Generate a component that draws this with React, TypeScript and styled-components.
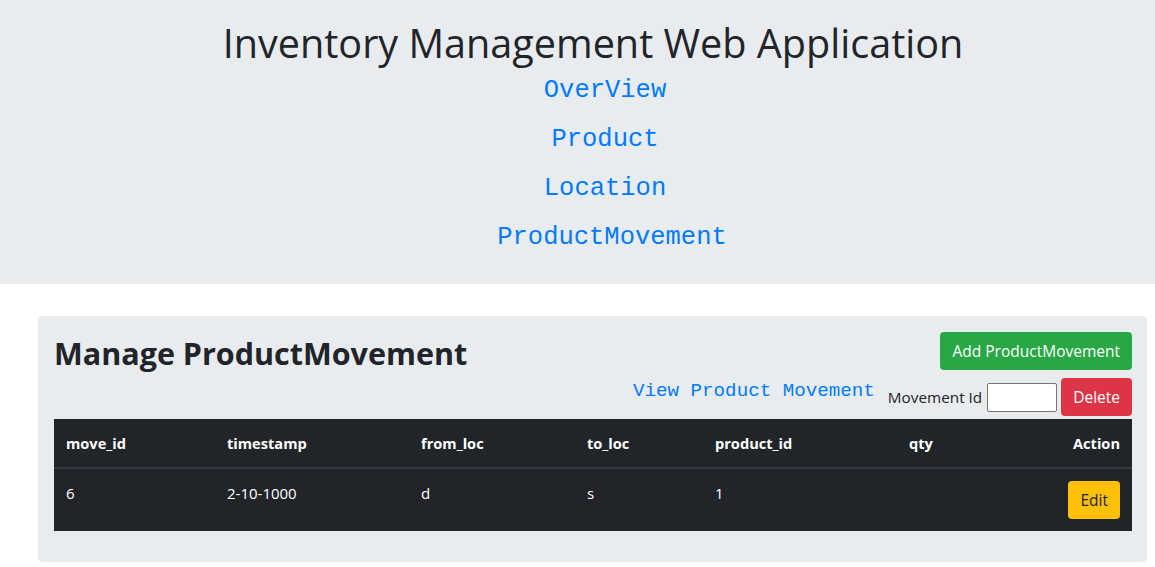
import React from 'react';
import styled, { createGlobalStyle } from 'styled-components';

const GlobalStyle = createGlobalStyle`
  html, body {
    margin: 0;
    padding: 0;
    background: #fff;
    color: #212529;
    font-family: "Open Sans", "Noto Sans", sans-serif;
    font-size: 16px;
  }
  * { box-sizing: border-box; }
`;

const Jumbotron = styled.header`
  background: #e9ecef;
  padding: 20px 0 22px 31px;
  text-align: center;
`;

const Title = styled.h1`
  margin: 0;
  font-size: 39.6px;
  font-weight: 400;
  line-height: 46px;
  color: #212529;
`;

const NavList = styled.nav`
  display: flex;
  flex-direction: column;
  align-items: center;
  padding-left: 24px;
`;

const NavLink = styled.a<{ $shift?: number }>`
  display: flex;
  align-items: center;
  height: 49px;
  padding-left: ${p => p.$shift ?? 0}px;
  font-family: "Liberation Mono", "DejaVu Sans Mono", monospace;
  font-size: 25.5px;
  color: #007bff;
  text-decoration: none;
`;

const Main = styled.main`
  padding: 32px 8px 0 38px;
`;

const Card = styled.section`
  background: #e9ecef;
  border-radius: 4px;
  padding: 16px 15px 15px 16px;
`;

const CardHeader = styled.div`
  display: flex;
  justify-content: space-between;
  align-items: flex-start;
`;

const Heading = styled.h2`
  margin: 0;
  font-size: 30.5px;
  font-weight: 700;
  line-height: 42px;
`;

const Actions = styled.div`
  display: flex;
  flex-direction: column;
  align-items: flex-end;
  gap: 8px;
`;

const ActionRow = styled.div`
  display: flex;
  align-items: center;
`;

const Button = styled.button<{ $variant: 'success' | 'danger' | 'warning' }>`
  height: 38px;
  padding: 0 12px;
  border: none;
  border-radius: 4px;
  font-family: inherit;
  font-size: 15.5px;
  cursor: pointer;
  background: ${p => (p.$variant === 'success' ? '#28a745' : p.$variant === 'danger' ? '#dc3545' : '#ffc107')};
  color: ${p => (p.$variant === 'warning' ? '#212529' : '#fff')};
`;

const ViewLink = styled.a`
  font-family: "Liberation Mono", "DejaVu Sans Mono", monospace;
  font-size: 19.2px;
  color: #007bff;
  text-decoration: none;
  margin: 0 13px 12px 0;
`;

const Label = styled.label`
  font-size: 15.3px;
  margin-right: 5px;
`;

const IdInput = styled.input`
  width: 70px;
  height: 29px;
  border: 1px solid #767676;
  border-radius: 2px;
  margin-right: 4px;
`;

const Table = styled.table`
  width: 100%;
  margin: 3px 0 16px;
  border-collapse: collapse;
  table-layout: fixed;
  background: #212529;
  color: #fff;
`;

const Th = styled.th<{ $right?: boolean }>`
  padding: 12px;
  height: 49px;
  font-size: 14.6px;
  font-weight: 700;
  text-align: ${p => (p.$right ? 'right' : 'left')};
  border-bottom: 2px solid #32383e;
`;

const Td = styled.td<{ $right?: boolean }>`
  padding: 12px;
  height: 62px;
  font-size: 15px;
  vertical-align: top;
  line-height: 24px;
  text-align: ${p => (p.$right ? 'right' : 'left')};
`;

const columns = [
  { name: 'move_id', width: 161 },
  { name: 'timestamp', width: 194 },
  { name: 'from_loc', width: 166 },
  { name: 'to_loc', width: 128 },
  { name: 'product_id', width: 194 },
  { name: 'qty', width: 150 },
];

const rows = [{ move_id: '6', timestamp: '2-10-1000', from_loc: 'd', to_loc: 's', product_id: '1', qty: '' }];

export default function App() {
  return (
    <>
      <GlobalStyle />
      <Jumbotron>
        <Title>Inventory Management Web Application</Title>
        <NavList>
          <NavLink href="#">OverView</NavLink>
          <NavLink href="#">Product</NavLink>
          <NavLink href="#">Location</NavLink>
          <NavLink href="#" $shift={14}>ProductMovement</NavLink>
        </NavList>
      </Jumbotron>
      <Main>
        <Card>
          <CardHeader>
            <Heading>Manage ProductMovement</Heading>
            <Actions>
              <Button $variant="success">Add ProductMovement</Button>
              <ActionRow>
                <ViewLink href="#">View Product Movement</ViewLink>
                <Label>Movement Id</Label>
                <IdInput type="text" />
                <Button $variant="danger">Delete</Button>
              </ActionRow>
            </Actions>
          </CardHeader>
          <Table>
            <thead>
              <tr>
                {columns.map(c => (
                  <Th key={c.name} style={{ width: c.width }}>{c.name}</Th>
                ))}
                <Th $right>Action</Th>
              </tr>
            </thead>
            <tbody>
              {rows.map(r => (
                <tr key={r.move_id}>
                  <Td>{r.move_id}</Td>
                  <Td>{r.timestamp}</Td>
                  <Td>{r.from_loc}</Td>
                  <Td>{r.to_loc}</Td>
                  <Td>{r.product_id}</Td>
                  <Td>{r.qty}</Td>
                  <Td $right>
                    <Button $variant="warning">Edit</Button>
                  </Td>
                </tr>
              ))}
            </tbody>
          </Table>
        </Card>
      </Main>
    </>
  );
}
